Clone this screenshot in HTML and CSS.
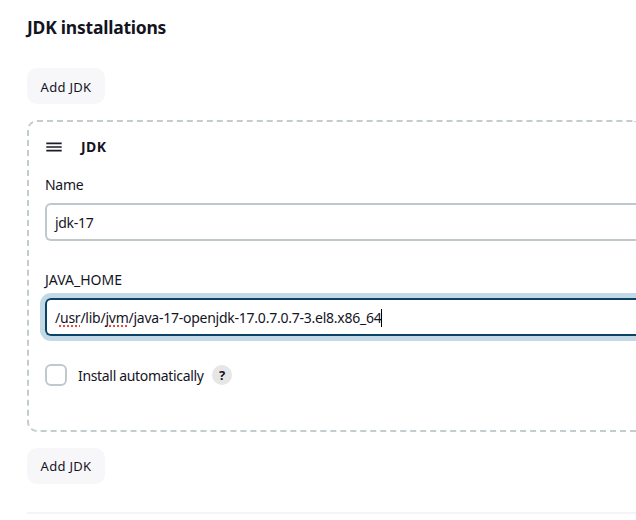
FILE: index.html
```html
<!DOCTYPE html>
<html lang="en">
<head>
<meta charset="utf-8">
<title>JDK installations</title>
<link rel="stylesheet" href="styles.css">
</head>
<body>
<main class="section">
  <h1 class="title"><span>JDK installations</span></h1>
  <button class="btn" type="button"><span>Add JDK</span></button>
  <section class="chunk">
    <header class="chunk-head">
      <svg class="handle" width="16" height="10" viewBox="0 0 16 10"><path d="M0.3 1.4H15.7M0.3 5H15.7M0.3 8.6H15.7"/></svg>
      <b class="chunk-name">JDK</b>
    </header>
    <div class="label label-name"><span>Name</span></div>
    <div class="input"><span class="value-name">jdk-17</span></div>
    <div class="label label-home"><span>JAVA_HOME</span></div>
    <div class="input focused"><span class="path">/<span class="typo">usr</span>/lib/<span class="typo">jvm</span>/java-17-openjdk-17.0.7.0.7-3.el8.x86_64</span><i class="caret"></i></div>
    <div class="check-row">
      <span class="checkbox"></span>
      <span class="check-label">Install automatically</span>
      <span class="help">?</span>
    </div>
  </section>
  <button class="btn btn-last" type="button"><span>Add JDK</span></button>
  <hr class="rule">
</main>
</body>
</html>
```
FILE: styles.css
```css
* { box-sizing: border-box; }
body {
  margin: 0;
  height: 520px;
  overflow: hidden;
  background: #fff;
  color: #14141f;
  font: 14px/20px "Noto Sans", "Open Sans", sans-serif;
}
.section { padding: 15px 0 0 27px; }
.title { margin: 0 0 29px; font-size: 17.5px; line-height: 24px; font-weight: 700; letter-spacing: -0.23px; }
.btn {
  display: flex;
  align-items: center;
  justify-content: center;
  width: 78px;
  height: 36px;
  padding: 2px 0 0;
  border: 0;
  border-radius: 10px;
  background: #f7f7fa;
  color: #14141f;
  font: 13px/20px "Noto Sans", sans-serif;
  letter-spacing: 0.3px;
}
.btn-last { padding-top: 0; }
.chunk {
  height: 312px;
  margin: 16px 0;
  padding: 15px 0 15px 16px;
  border: 2px dashed #c3cccf;
  border-right: 0;
  border-radius: 10px 0 0 10px;
}
.chunk-head { display: flex; align-items: center; gap: 19px; height: 20px; padding-left: 1px; }
.handle { fill: none; stroke: #1c1c2b; stroke-width: 1.7; }
.chunk-name { font-size: 14px; letter-spacing: 0.4px; }
.label { height: 20px; }
.label-name { margin: 18px 0 8px; letter-spacing: -0.3px; }
.label-home { margin: 29px 0 8px; }
.input {
  display: flex;
  align-items: center;
  height: 38px;
  padding: 2px 8px 0;
  border: 2px solid #bfc9cd;
  border-right: 0;
  border-radius: 6px 0 0 6px;
}
.value-name { letter-spacing: -0.3px; }
.path { letter-spacing: -0.245px; }
.focused { border-color: #0b4366; box-shadow: 0 0 0 5px #c3d9e6; }
.typo { text-decoration: underline dotted #e84545 1.5px; text-underline-offset: 2px; text-decoration-skip-ink: none; }
.caret { width: 1px; height: 18px; background: #000; }
.check-row { display: flex; align-items: center; height: 22px; margin-top: 28px; }
.checkbox { width: 22px; height: 22px; border: 2px solid #bfc9cd; border-radius: 6px; }
.check-label { width: 134px; margin-left: 11px; padding-top: 2px; white-space: nowrap; letter-spacing: -0.33px; }
.help {
  width: 20px;
  height: 20px;
  border-radius: 50%;
  background: #e6e6e6;
  font-size: 13px;
  font-weight: 700;
  text-align: center;
}
.rule { height: 2px; margin: 28px 0 0; border: 0; background: #f3f3f8; }
```
